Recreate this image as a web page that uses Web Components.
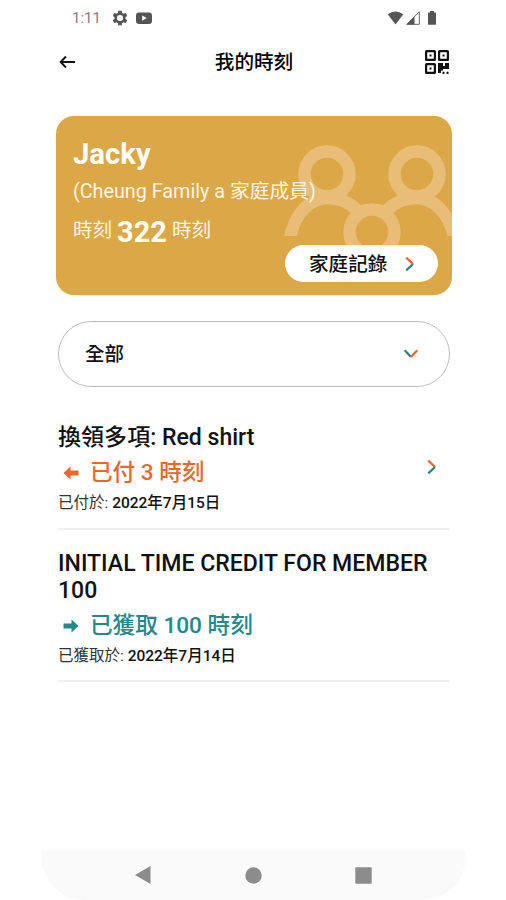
<!DOCTYPE html>
<html lang="zh-Hant">
<head>
<meta charset="utf-8">
<title>我的時刻</title>
<style>
html,body{margin:0;background:#fff}
body{font-family:Roboto,"Noto Sans CJK TC",sans-serif;color:#111;width:506px;height:900px;overflow:hidden}
</style>
</head>
<body>
<time-app></time-app>
<script>
function define(name, markup){
  const t=document.createElement('template');
  t.innerHTML=markup;
  customElements.define(name, class extends HTMLElement{
    constructor(){super();this.attachShadow({mode:'open'}).append(t.content.cloneNode(true));}
  });
}

define('status-bar', `
<style>
:host{display:flex;align-items:center;height:36px;padding:0 29px 0 31px;box-sizing:border-box;color:#555}
.time{font-size:15px;line-height:36px;width:28px;color:#808080;white-space:nowrap}
svg{display:block;flex:none}
.gear{margin-left:12px}.tube{margin-left:7px}.wifi{margin-left:auto}.sig{margin-left:2px}.bat{margin-left:7px}
</style>
<span class="time">1:11</span>
<svg class="gear" width="16" height="16" viewBox="1.5 1.5 21 21" fill="#555"><path d="M19.14 12.94c.04-.3.06-.61.06-.94 0-.32-.02-.64-.07-.94l2.03-1.58c.18-.14.23-.41.12-.61l-1.92-3.32c-.12-.22-.37-.29-.59-.22l-2.39.96c-.5-.38-1.03-.7-1.62-.94l-.36-2.54c-.04-.24-.24-.41-.48-.41h-3.84c-.24 0-.43.17-.47.41l-.36 2.54c-.59.24-1.13.57-1.62.94l-2.39-.96c-.22-.08-.47 0-.59.22L2.74 8.87c-.12.21-.08.47.12.61l2.03 1.58c-.05.3-.09.63-.09.94s.02.64.07.94l-2.03 1.58c-.18.14-.23.41-.12.61l1.92 3.32c.12.22.37.29.59.22l2.39-.96c.5.38 1.03.7 1.62.94l.36 2.54c.05.24.24.41.48.41h3.84c.24 0 .44-.17.47-.41l.36-2.54c.59-.24 1.13-.56 1.62-.94l2.39.96c.22.08.47 0 .59-.22l1.92-3.32c.12-.22.07-.47-.12-.61l-2.01-1.58zM12 16a4 4 0 1 1 0-8 4 4 0 0 1 0 8z"/></svg>
<svg class="tube" width="18" height="14" viewBox="0 0 18 14"><rect x="1" y="1.5" width="16" height="11.5" rx="3" fill="#555"/><path d="M7.2 4.4v5.4l4.6-2.7z" fill="#fff"/></svg>
<svg class="wifi" width="17" height="14" viewBox="0 0 17 14"><path d="M.7 3.3Q8.500-2.300 16.300 3.300L8.500 13.500Z" fill="#555"/></svg>
<svg class="sig" width="14" height="14" viewBox="0 0 14 14"><path d="M.8 13.300L13.300.8V13.300Z" fill="#fff" stroke="#666" stroke-width="1"/><path d="M.5 13.500L8.500 5.500V13.500Z" fill="#555"/></svg>
<svg class="bat" width="10" height="14" viewBox="0 0 10 14"><path d="M3 0h4v1.500h1.200q.8 0 .8.800V13q0 .8-.8.800H1.800Q1 13.800 1 13V2.300q0-.8.800-.8H3z" fill="#555"/></svg>
`);

define('title-bar', `
<style>
:host{display:grid;grid-template-columns:28px 1fr 28px;align-items:center;height:52px;padding:0 16px 0 17px;color:#000}
h1{margin:0;padding-top:2px;font-size:19.600px;line-height:28px;font-weight:500;text-align:center}
svg{display:block}
.back{margin-left:1px}
.qr{margin-left:1.500px}
</style>
<svg class="back" width="17" height="14" viewBox="0 0 17 14" fill="none" stroke="#111" stroke-width="1.900"><path d="M16 7H2M7 1.500L1.600 7L7 12.500"/></svg>
<h1><slot></slot></h1>
<svg class="qr" width="26" height="26" viewBox="0 0 26 26"><g fill="none" stroke="#111" stroke-width="2.200"><rect x="2.100" y="2.100" width="8.800" height="8.800" rx=".5"/><rect x="15.100" y="2.100" width="8.800" height="8.800" rx=".5"/><rect x="2.100" y="15.100" width="8.800" height="8.800" rx=".5"/></g><g fill="#111"><path d="M5.500 5.500h2v2h-2zM18.500 5.500h2v2h-2zM5.500 18.500h2v2h-2zM14 14h5v3h2v-3h4v6h-6v1.500h-2V24H14zM18.500 22.700h2V25h-2zM22.500 22.700h2V25h-2z"/></g></svg>
`);

define('duo-chevron', `
<style>
:host{display:block;width:10px;height:16px}
:host([down]){transform:rotate(90deg)}
svg{display:block}
:host([down]) .a{stroke:#e8682b}
:host([down]) .b{stroke:#24888a}
</style>
<svg width="10" height="16" viewBox="0 0 10 16" fill="none" stroke-width="2.300"><path class="b" stroke="#24888a" d="M1.300 14.300L8 8"/><path class="a" stroke="#e8682b" d="M1.300 1.700L8 8"/></svg>
`);

define('member-card', `
<style>
:host{display:block;position:relative;height:179px;margin:0 14px 0 15px;border-radius:18px;background:#dca747;color:#fff;overflow:hidden;box-sizing:border-box;padding:20px 0 0 17px;white-space:nowrap}
.art{position:absolute;right:0;top:0}
.name,.family,.total{position:relative}
.name{font-size:29.300px;line-height:36px;font-weight:700}
.family{font-size:19.750px;line-height:28px;margin-top:6px;color:#fff6e6}
.total{font-size:19.500px;height:36px;line-height:36px;margin-top:7px;display:flex;align-items:center;gap:5px;color:#fff6e6}
b{font-size:29px;font-weight:700;color:#fff;padding-top:1px}
.pill{position:absolute;right:14px;bottom:13px;width:153px;height:37px;border-radius:19px;background:#fff;color:#111;display:flex;align-items:center;box-sizing:border-box;padding:0 23px 0 24px;justify-content:space-between;font-size:19.600px;font-weight:500;line-height:37px}
.pill span{padding-top:1px}
</style>
<svg class="art" width="172" height="179" viewBox="280 116 172 179" fill="none" stroke="#e7bd77" stroke-width="12.500"><clipPath id="c"><rect x="280" y="116" width="172" height="120"/></clipPath><circle cx="327" cy="174" r="22.500"/><circle cx="417" cy="174" r="22.500"/><path clip-path="url(#c)" d="M289.500 242C293 215 309 198 328 198C341 198 350 203 357 210M387 210C394 203 403 198 416 198C435 198 451 215 455 242"/><circle cx="372" cy="232" r="22.500"/></svg>
<div class="name"><slot name="name"></slot></div>
<div class="family"><slot name="family"></slot></div>
<div class="total"><span>時刻</span><b><slot name="total"></slot></b><span>時刻</span></div>
<div class="pill"><span>家庭記錄</span><duo-chevron></duo-chevron></div>
`);

define('filter-select', `
<style>
:host{display:flex;align-items:center;justify-content:space-between;height:66px;box-sizing:border-box;margin:26px 16px 0 17px;padding:0 33px 0 26px;border:1px solid #bdbdbd;border-radius:33px;font-size:19.500px;font-weight:500;color:#111}
span{padding-bottom:3px}
</style>
<span><slot></slot></span><duo-chevron down></duo-chevron>
`);

define('credit-entry', `
<style>
:host{display:grid;grid-template-columns:1fr auto;align-items:start;margin:0 16px 0 17px;border-bottom:2px solid #f0f0f0;box-sizing:border-box}
.title{font-size:23.050px;line-height:27px;font-weight:500;color:#111}
.amount{display:flex;align-items:center;font-size:22.600px;line-height:34px;font-weight:500;color:var(--tone);padding-left:5px;gap:11px;margin-top:5px}
.date{font-size:15.500px;line-height:22px;color:#333;margin-top:2px}
.date b{font-weight:500;color:#111}
svg{display:block}
:host([earned]) svg{transform:scaleX(-1)}
duo-chevron{margin:35px 13px 0 0}
:host([earned]) duo-chevron{display:none}
</style>
<div><div class="title"><slot name="title"></slot></div>
<div class="amount"><svg width="16" height="14" viewBox="0 0 16 14"><path fill="currentColor" d="M.5 7L7.500.5V4.500H15.500V9.500H7.500V13.500Z"/></svg><span><slot name="amount"></slot></span></div>
<div class="date"><slot name="label"></slot> <b><slot name="date"></slot></b></div></div>
<duo-chevron></duo-chevron>
`);

define('nav-bar', `
<style>
:host{display:flex;align-items:center;justify-content:space-between;height:50px;margin-top:auto;padding:0 94px;background:#fafafa;border-radius:0 0 44px 44px}
svg{display:block}
</style>
<svg width="16" height="18" viewBox="0 0 16 18"><path d="M0 9L15.500 0V18Z" fill="#8c8c8c"/></svg>
<svg width="17" height="17" viewBox="0 0 17 17"><circle cx="8.500" cy="8.500" r="8.200" fill="#8c8c8c"/></svg>
<svg width="17" height="17" viewBox="0 0 17 17"><rect x=".3" y=".3" width="16.400" height="16.400" rx="1" fill="#8c8c8c"/></svg>
`);

define('time-app', `
<style>
:host{display:flex;flex-direction:column;width:425px;height:900px;margin-left:41px}
title-bar{margin-bottom:28px}
.paid{--tone:#e8682b;height:106px;margin-top:37px}
.earned{--tone:#24888a;height:152px;padding-top:20px}
</style>
<status-bar></status-bar>
<title-bar>我的時刻</title-bar>
<member-card><span slot="name">Jacky</span><span slot="family">(Cheung Family a 家庭成員)</span><span slot="total">322</span></member-card>
<filter-select>全部</filter-select>
<credit-entry class="paid"><span slot="title">換領多項: Red shirt</span><span slot="amount">已付 3 時刻</span><span slot="label">已付於:</span><span slot="date">2022年7月15日</span></credit-entry>
<credit-entry class="earned" earned><span slot="title">INITIAL TIME CREDIT FOR MEMBER 100</span><span slot="amount">已獲取 100 時刻</span><span slot="label">已獲取於:</span><span slot="date">2022年7月14日</span></credit-entry>
<nav-bar></nav-bar>
`);
</script>
</body>
</html>
